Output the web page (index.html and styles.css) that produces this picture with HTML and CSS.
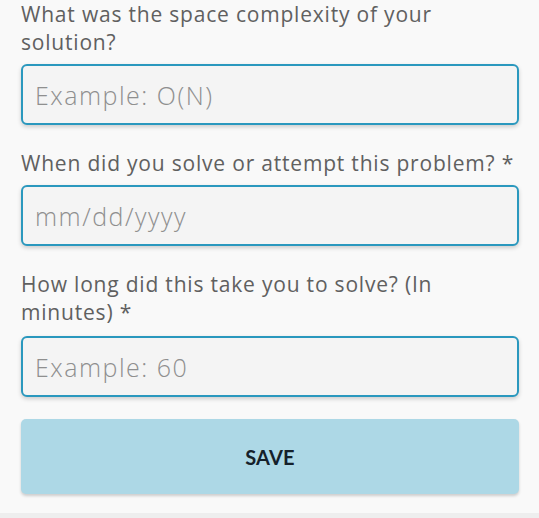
FILE: index.html
```html
<!DOCTYPE html>
<html>
<head>
<meta charset="utf-8">
<link rel="stylesheet" href="styles.css">
</head>
<body>
<div class="page">
  <form class="form">
    <div class="field">
      <label class="label">What was the space complexity of your solution?</label>
      <input class="input" type="text" placeholder="Example: O(N)">
    </div>
    <div class="field">
      <label class="label">When did you solve or attempt this problem? *</label>
      <input class="input" type="text" placeholder="mm/dd/yyyy">
    </div>
    <div class="field">
      <label class="label">How long did this take you to solve? (In minutes) *</label>
      <input class="input" type="text" placeholder="Example: 60">
    </div>
    <button class="save" type="button">SAVE</button>
  </form>
  <div class="footer"></div>
</div>
</body>
</html>
```
FILE: styles.css
```css
html, body {
  margin: 0;
  padding: 0;
  background: #f9f9f9;
}
.page {
  height: 518px;
  display: flex;
  flex-direction: column;
  overflow: hidden;
}
.form {
  flex: 1;
  padding: 0 20px 0 21px;
  display: flex;
  flex-direction: column;
}
.field {
  display: flex;
  flex-direction: column;
  margin-bottom: 24px;
}
.field:last-of-type .label {
  margin-bottom: 10px;
}
.label {
  font-family: "Open Sans", "Noto Sans", sans-serif;
  font-size: 21px;
  line-height: 28px;
  letter-spacing: 0.8px;
  color: #606060;
  margin-bottom: 8px;
}
.input {
  box-sizing: border-box;
  height: 61px;
  width: 100%;
  border: 2px solid #2a98be;
  border-radius: 6px;
  background: #f4f4f4;
  box-shadow: 0 2px 4px rgba(0,0,0,0.18);
  padding: 0 12px;
  font-family: "Open Sans", "Noto Sans", sans-serif;
  font-weight: 300;
  font-size: 25px;
  letter-spacing: 1.5px;
  color: #444;
  outline: none;
}
.input::placeholder {
  color: #8f8f8f;
}
.save {
  height: 75px;
  margin-top: -2px;
  border: none;
  border-radius: 5px;
  background: #add8e6;
  box-shadow: 0 2px 3px rgba(0,0,0,0.18);
  font-family: "Lato", "Roboto", sans-serif;
  font-weight: 700;
  font-size: 20px;
  color: #15212b;
  letter-spacing: 0.2px;
}
.footer {
  height: 5px;
  background: #eeeeee;
}
```
